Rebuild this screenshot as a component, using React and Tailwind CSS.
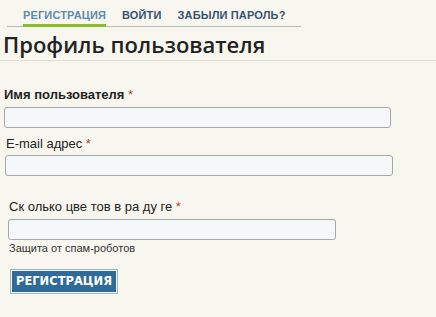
import React from "react";

const tabs = [
  { label: "РЕГИСТРАЦИЯ", active: true },
  { label: "ВОЙТИ" },
  { label: "ЗАБЫЛИ ПАРОЛЬ?" },
];

const Req = () => <span className="text-[#c0392b] font-normal"> *</span>;

export default function App() {
  return (
    <div className="w-[436px] h-[317px] bg-[#f8f7ef] font-['Liberation_Sans',Arial,sans-serif] text-[#222] overflow-hidden">
      {/* TABS */}
      <div className="ml-[7px] w-[294px] border-b border-[#b9bcb4] flex gap-[16px] pl-[16px] pt-[9px]">
        {tabs.map((t) => (
          <div
            key={t.label}
            className={`whitespace-nowrap text-[11px] leading-[13px] font-bold tracking-[0.15px] pb-[2px] border-b-[3px] -mb-[1px] ${
              t.active
                ? "text-[#5d8cad] border-[#8dbb2c]"
                : "text-[#34536f] border-transparent"
            }`}
          >
            {t.label}
          </div>
        ))}
      </div>

      {/* HEADING */}
      <h1 className="pl-[3px] pt-[4px] pb-[3px] text-[22px] leading-[26px] font-semibold text-[#222] border-b border-[#e0dfd2] font-['Open_Sans',sans-serif]">
        Профиль пользователя
      </h1>

      {/* FORM */}
      <div className="pt-[26px] text-[13px]">
        <div className="pl-[4px] font-bold leading-[15px]">
          Имя пользователя<Req />
        </div>
        <input className="block mt-[5px] ml-[4px] w-[387px] h-[21px] rounded-[3px] border border-[#a7a9a7] bg-[#f5f8fb]" />

        <div className="pl-[6px] mt-[8px] leading-[15px]">
          E-mail адрес<Req />
        </div>
        <input className="block mt-[4px] ml-[5px] w-[388px] h-[21px] rounded-[3px] border border-[#a7a9a7] bg-[#f5f8fb]" />

        <div className="pl-[9px] mt-[23px] leading-[15px]">
          Ск олько цве тов в ра ду ге<Req />
        </div>
        <input className="block mt-[5px] ml-[8px] w-[328px] h-[21px] rounded-[3px] border border-[#a7a9a7] bg-[#f5f8fb]" />
        <div className="pl-[9px] mt-[2px] text-[11px] leading-[13px] text-[#333]">
          Защита от спам-роботов
        </div>

        <button className="block mt-[14px] ml-[10px] border border-[#9ab5cb] p-[1px] bg-[#f8f7ef]">
          <span className="block bg-[#2f6a98] text-white font-['DejaVu_Sans',Verdana,sans-serif] font-bold text-[11.5px] leading-[21px] px-[4px]">
            РЕГИСТРАЦИЯ
          </span>
        </button>
      </div>
    </div>
  );
}
